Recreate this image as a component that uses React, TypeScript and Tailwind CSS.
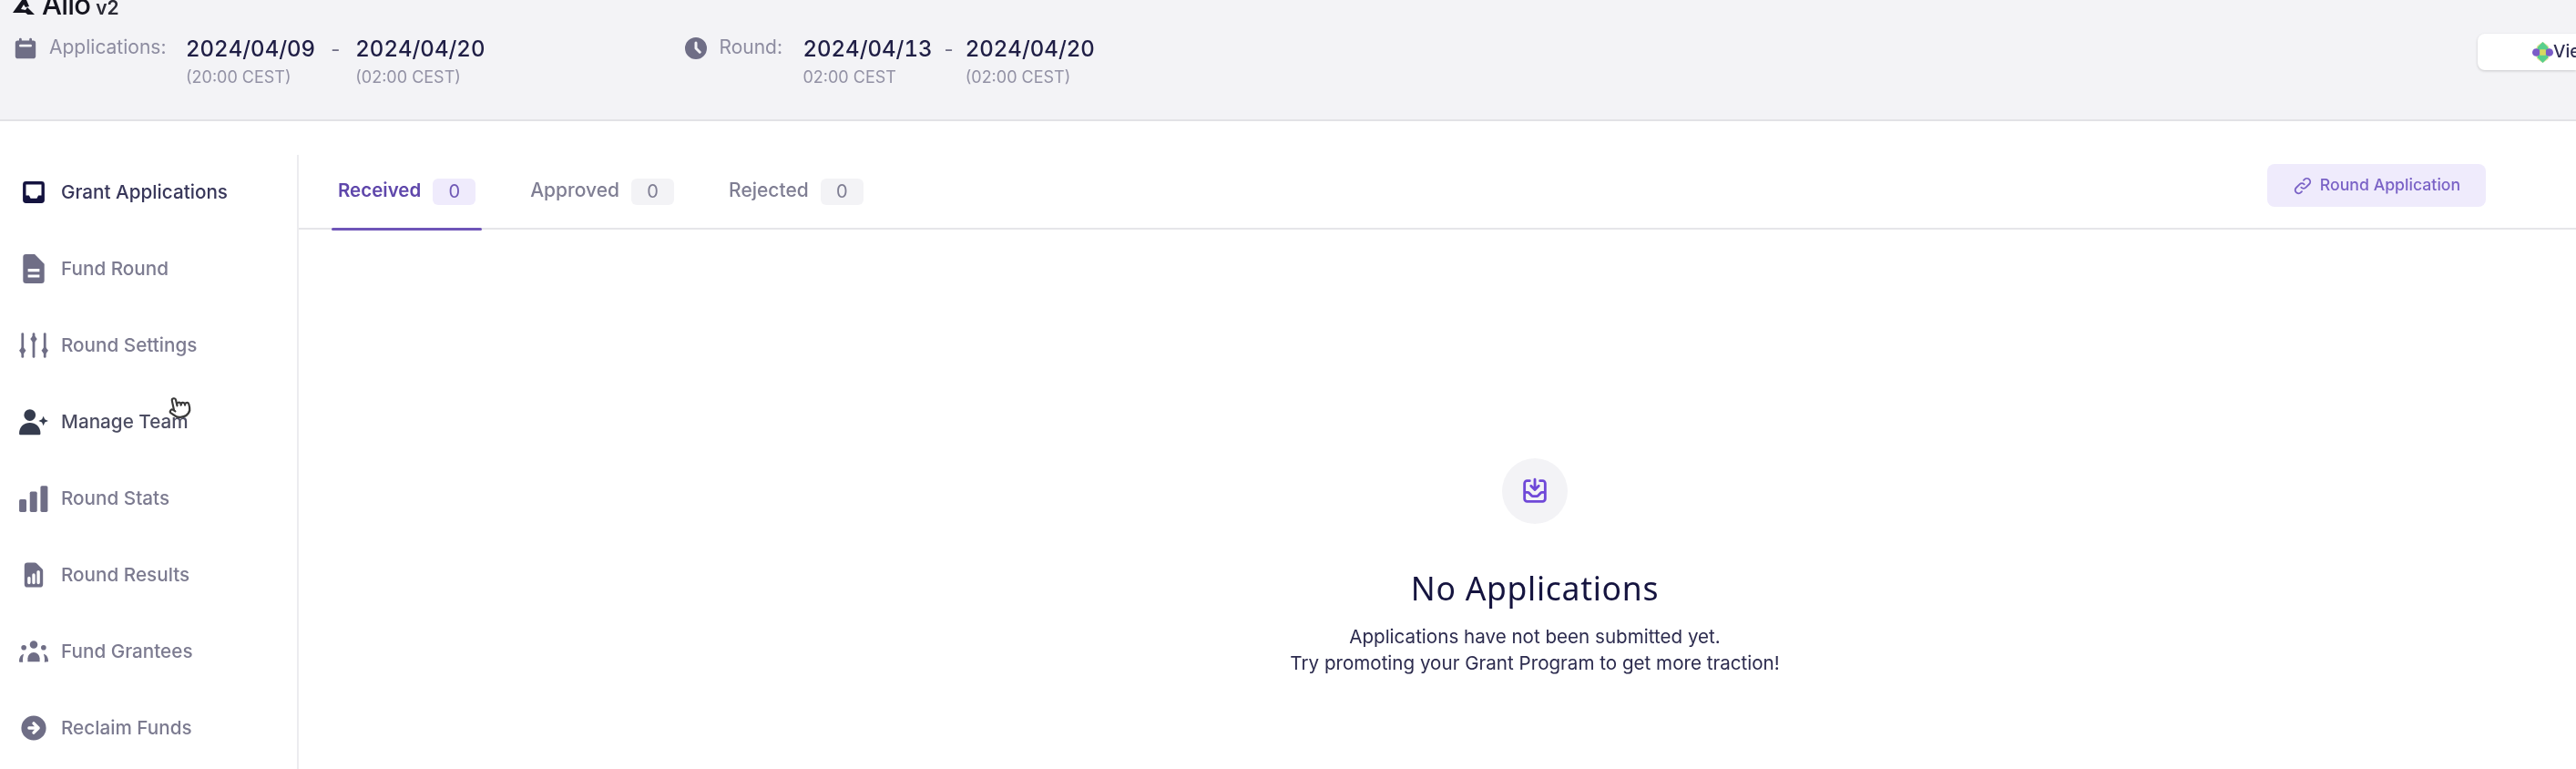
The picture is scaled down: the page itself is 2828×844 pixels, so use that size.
import React from 'react';
import {
  HiInbox,
  HiDocumentReport,
  HiArrowCircleRight,
  HiCalendar,
  HiClock,
  HiOutlineLink,
  HiOutlineInboxIn,
} from 'react-icons/hi';
import { Pointer } from 'lucide-react';

const font = "font-['Inter','Liberation_Sans',sans-serif]";

type IconProps = { className?: string };

function FundIcon({ className }: IconProps) {
  return (
    <svg viewBox="0 0 32 32" fill="currentColor" className={className}>
      <path fillRule="evenodd" d="M8 1h9l10 10v17a3 3 0 0 1-3 3H8a3 3 0 0 1-3-3V4a3 3 0 0 1 3-3zm2 15v3h12v-3zm0 6v3h12v-3z" />
    </svg>
  );
}

function SlidersIcon({ className }: IconProps) {
  return (
    <svg viewBox="0 0 32 32" fill="currentColor" className={className}>
      <rect x="3.2" y="3" width="2.6" height="26" rx="1.3" />
      <path d="M4.5 17l3.5 4.5-3.5 4.500L1 21.500z" />
      <rect x="14.700" y="3" width="2.600" height="26" rx="1.300" />
      <path d="M16 5l3.500 4.500L16 14l-3.500-4.500z" />
      <rect x="26.200" y="3" width="2.600" height="26" rx="1.300" />
      <path d="M27.500 17l3.500 4.500-3.500 4.500-3.500-4.500z" />
    </svg>
  );
}

function TeamIcon({ className }: IconProps) {
  return (
    <svg viewBox="0 0 32 32" fill="currentColor" className={className}>
      <circle cx="12" cy="9" r="6" />
      <path d="M1 28c0-7 5-11 11-11s11 4 11 11c0 1-.6 1.500-1.500 1.500h-19C1.600 29.500 1 29 1 28z" />
      <path d="M26 10l1.500 3.500L31 15l-3.500 1.500L26 20l-1.500-3.500L21 15l3.500-1.500z" />
    </svg>
  );
}

function StatsIcon({ className }: IconProps) {
  return (
    <svg viewBox="0 0 32 32" fill="currentColor" className={className}>
      <rect x="1" y="17" width="7.500" height="13" rx="1.500" />
      <rect x="12" y="9" width="7.500" height="21" rx="1.500" />
      <rect x="23" y="3" width="7.500" height="27" rx="1.500" />
    </svg>
  );
}

function GranteesIcon({ className }: IconProps) {
  return (
    <svg viewBox="0 0 36 32" fill="currentColor" className={className}>
      <circle cx="18" cy="8" r="4.500" />
      <circle cx="6.500" cy="11.500" r="3" />
      <circle cx="29.500" cy="11.500" r="3" />
      <path d="M11 28v-4a7 7 0 0 1 14 0v4z" />
      <path d="M1 28c0-5 2-8 5.500-9-1 3-1.500 6-1 9.500L2 28.500z" />
      <path d="M35 28c0-5-2-8-5.500-9 1 3 1.500 6 1 9.500l3.500-.5z" />
    </svg>
  );
}

const navItems = [
  { label: 'Grant Applications', Icon: HiInbox, text: 'text-[#38375a]', icon: 'text-[#14133f]' },
  { label: 'Fund Round', Icon: FundIcon, text: 'text-[#7c7b90]', icon: 'text-[#6f6e86]' },
  { label: 'Round Settings', Icon: SlidersIcon, text: 'text-[#7c7b90]', icon: 'text-[#6f6e86]' },
  { label: 'Manage Team', Icon: TeamIcon, text: 'text-[#4c4d62]', icon: 'text-[#353c4e]' },
  { label: 'Round Stats', Icon: StatsIcon, text: 'text-[#7c7b90]', icon: 'text-[#6f6e86]' },
  { label: 'Round Results', Icon: HiDocumentReport, text: 'text-[#7c7b90]', icon: 'text-[#6f6e86]' },
  { label: 'Fund Grantees', Icon: GranteesIcon, text: 'text-[#7c7b90]', icon: 'text-[#6f6e86]' },
  { label: 'Reclaim Funds', Icon: HiArrowCircleRight, text: 'text-[#7c7b90]', icon: 'text-[#6f6e86]' },
];

function DateCol({ date, time }: { date: string; time: string }) {
  return (
    <div className="flex flex-col">
      <span className="text-[24px] leading-[30px] font-medium tabular-nums text-[#1f1e45] whitespace-nowrap">{date}</span>
      <span className="text-[18px] leading-[22px] mt-[5px] text-[#9392a5] whitespace-nowrap">{time}</span>
    </div>
  );
}

function Tab({ label, active }: { label: string; active?: boolean }) {
  return (
    <div className={`relative flex items-center gap-[13px] h-[82px] px-[7px] ${active ? 'text-[#5f47ab]' : 'text-[#7f7e93]'}`}>
      <span className={`-mt-[2px] ${active ? 'text-[20.5px] font-semibold' : 'text-[21px] font-medium'}`}>{label}</span>
      <span className={`w-[47px] h-[29px] rounded-[6px] flex items-center justify-center text-[20px] ${active ? 'bg-[#efebfc] text-[#7059b5]' : 'bg-[#f3f3f6]'}`}>0</span>
      {active && <div className="absolute left-0 right-0 -bottom-[2px] h-[3px] bg-[#6f55b8] rounded-sm" />}
    </div>
  );
}

export default function App() {
  return (
    <div className={`${font} relative w-[2828px] h-[844px] overflow-hidden bg-white blur-[0.7px]`}>
      {/* top bar */}
      <div className="h-[133px] bg-[#f3f3f6] border-b-2 border-[#e2e2e6] pl-[16px] overflow-hidden">
        <div className="flex items-start h-[18px]">
          <svg viewBox="0 0 24 16" className="w-[24px] h-[16px] -ml-[2px] text-[#15151f]" fill="currentColor">
            <path fillRule="evenodd" d="M10 0h5l3 7-4 1-2-3-3 5 5 1 2-3 8 8-7 .5-3-2.500L0 14z" />
          </svg>
          <span className="ml-[8px] -mt-[4px] text-[31px] leading-[18px] font-medium tracking-tight text-[#15151f]">Allo</span>
          <span className="ml-[6px] text-[21px] leading-[18px] font-semibold text-[#2a2a35]">v2</span>
        </div>
        <div className="flex items-start mt-[21px]">
          <HiCalendar className="w-[28px] h-[28px] -ml-[2px] text-[#6f6e86]" />
          <span className="ml-[12px] w-[150px] text-[21px] leading-[26px] text-[#8d8ca0]">Applications:</span>
          <DateCol date="2024/04/09" time="(20:00 CEST)" />
          <span className="mx-[17px] text-[22px] leading-[30px] text-[#6f6e85]">-</span>
          <DateCol date="2024/04/20" time="(02:00 CEST)" />
          <HiClock className="ml-[217px] w-[30px] h-[30px] -mt-[1px] text-[#6f6e86]" />
          <span className="ml-[10px] w-[92px] text-[21px] leading-[26px] text-[#8d8ca0]">Round:</span>
          <DateCol date="2024/04/13" time="02:00 CEST" />
          <span className="mx-[13px] text-[22px] leading-[30px] text-[#6f6e85]">-</span>
          <DateCol date="2024/04/20" time="(02:00 CEST)" />
          <div className="ml-auto -mt-[2px] w-[108px] shrink-0 h-[40px] bg-white rounded-l-[8px] shadow-[0_1px_3px_rgba(0,0,0,0.18)] flex items-center pl-[60px] overflow-hidden">
            <svg viewBox="0 0 24 24" className="w-[23px] h-[23px] shrink-0">
              <path d="M6 4l6-4 6 4 2 4-8 4-8-4zM6 20l6 4 6-4 2-4-8-4-8 4z" fill="#e8e6a0" />
              <path d="M12 0l6 6v12l-6 6-6-6V6z" fill="#58cf8c" />
              <circle cx="4.500" cy="12" r="4.500" fill="#7a5cc8" />
              <circle cx="19.500" cy="12" r="4.500" fill="#7a5cc8" />
              <rect x="8.500" y="8.500" width="7" height="7" rx="1" fill="#d8d860" />
            </svg>
            <span className="text-[19px] font-medium text-[#2f2e52] whitespace-nowrap">View Round</span>
          </div>
        </div>
      </div>

      <div className="flex mt-[37px] h-[674px]">
        {/* sidebar */}
        <div className="w-[328px] shrink-0 border-r-2 border-[#ececef] pl-[20px]">
          {navItems.map(({ label, Icon, text, icon }) => (
            <div key={label} className="h-[84px] flex items-center -translate-y-[1px]">
              <Icon className={`w-[34px] h-[34px] shrink-0 ${icon}`} />
              <span className={`ml-[13px] text-[20.7px] font-medium whitespace-nowrap ${text}`}>{label}</span>
            </div>
          ))}
        </div>

        {/* main */}
        <div className="flex-1 min-w-0">
          <div className="flex items-center justify-between h-[82px] border-b-2 border-[#e6e6e9] pl-[36px] pr-[99px]">
            <div className="flex gap-[46px]">
              <Tab label="Received" active />
              <Tab label="Approved" />
              <Tab label="Rejected" />
            </div>
            <button className="w-[240px] h-[47px] -mt-[13px] rounded-[8px] bg-[#efebfc] text-[#7a62c6] flex items-center justify-center gap-[8px] text-[17.7px] font-medium">
              <HiOutlineLink className="w-[22px] h-[22px]" />
              Round Application
            </button>
          </div>

          <div className="flex flex-col items-center pl-[214px] pt-[251px]">
            <div className="w-[72px] h-[72px] rounded-full bg-[#f3f3f6] flex items-center justify-center">
              <HiOutlineInboxIn className="w-[34px] h-[34px] text-[#6f48d8]" />
            </div>
            <h2 className="mt-[48px] text-[35.5px] leading-[44px] tracking-[0.02em] text-[#15143f] font-['Noto_Sans',sans-serif]">No Applications</h2>
            <p className="mt-[17px] text-[20.6px] leading-[29px] text-[#2c2b4e] text-center">
              Applications have not been submitted yet.
              <br />
              Try promoting your Grant Program to get more traction!
            </p>
          </div>
        </div>
      </div>

      {/* mouse cursor from the recording */}
      <Pointer className="absolute left-[184px] top-[433px] w-[26px] h-[28px] -rotate-12 fill-white text-[#3a3a3a]" strokeWidth={2} />
    </div>
  );
}
